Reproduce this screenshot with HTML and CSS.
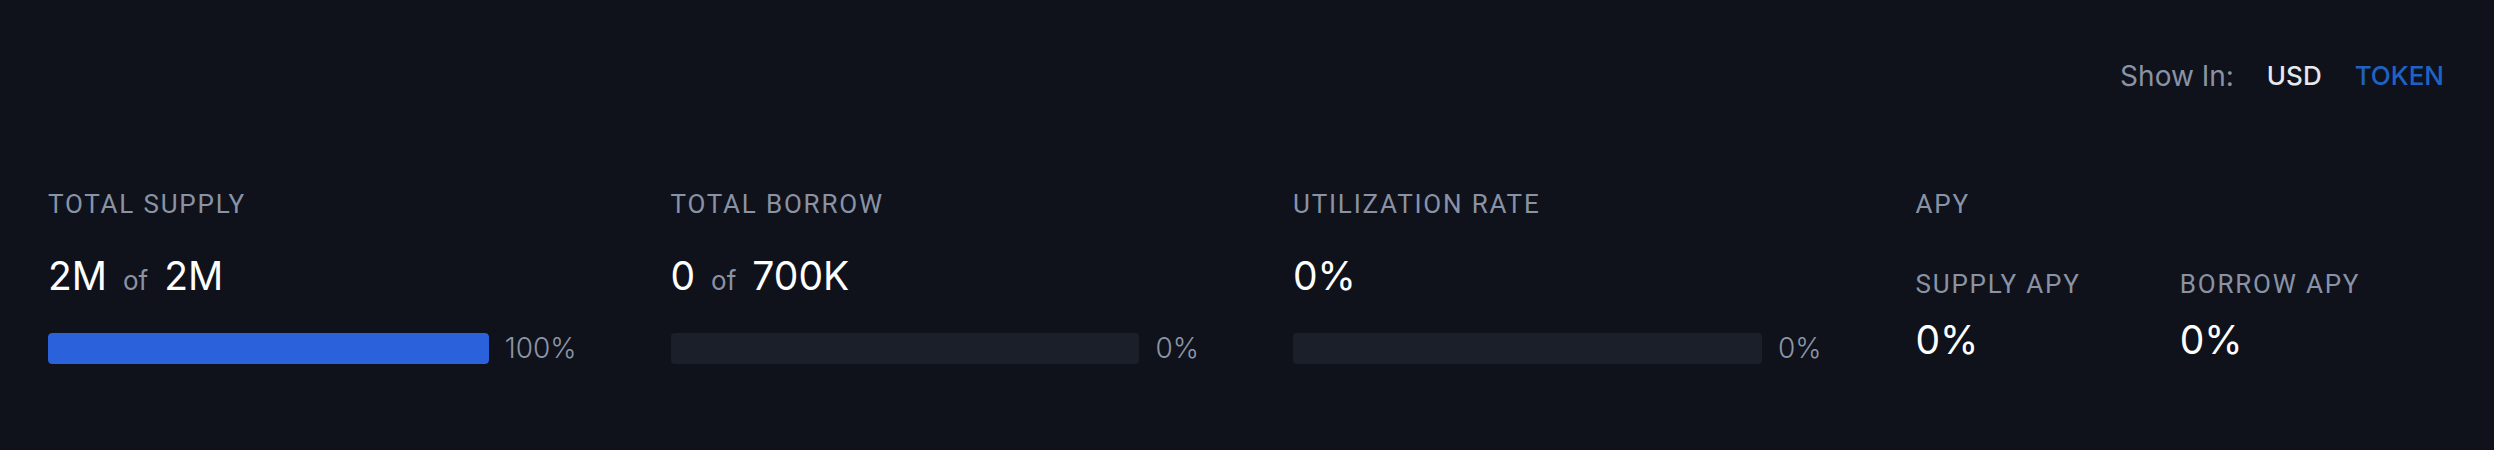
FILE: index.html
```html
<!DOCTYPE html>
<html lang="en">
<head>
<meta charset="utf-8">
<title>Market Stats</title>
<link rel="stylesheet" href="styles.css">
</head>
<body>
<div class="panel">
  <div class="toolbar">
    <span class="show-in">Show In:</span>
    <button class="opt opt-usd" type="button">USD</button>
    <button class="opt opt-token" type="button">TOKEN</button>
  </div>
  <div class="stats">
    <div class="stat">
      <div class="label">TOTAL SUPPLY</div>
      <div class="value">2M <span class="of">of</span> 2M</div>
      <div class="bar-row">
        <div class="track"><div class="fill" style="width:100%"></div></div>
        <span class="pct">100%</span>
      </div>
    </div>
    <div class="stat">
      <div class="label">TOTAL BORROW</div>
      <div class="value">0 <span class="of">of</span> 700K</div>
      <div class="bar-row">
        <div class="track"><div class="fill" style="width:0%"></div></div>
        <span class="pct">0%</span>
      </div>
    </div>
    <div class="stat">
      <div class="label">UTILIZATION RATE</div>
      <div class="value">0%</div>
      <div class="bar-row">
        <div class="track"><div class="fill" style="width:0%"></div></div>
        <span class="pct">0%</span>
      </div>
    </div>
    <div class="stat">
      <div class="label">APY</div>
      <div class="apy-grid">
        <div class="apy">
          <div class="label">SUPPLY APY</div>
          <div class="value apy-value">0%</div>
        </div>
        <div class="apy">
          <div class="label">BORROW APY</div>
          <div class="value apy-value">0%</div>
        </div>
      </div>
    </div>
  </div>
</div>
</body>
</html>
```
FILE: styles.css
```css
* { box-sizing: border-box; }
html, body {
  margin: 0;
  padding: 0;
  background: #0f121b;
  height: 100%;
}
body {
  font-family: Inter, "Noto Sans", sans-serif;
  color: #ffffff;
}
.panel {
  padding: 59px 50px 0 48px;
  min-height: 450px;
  background: #0f121b;
}
.toolbar {
  display: flex;
  justify-content: flex-end;
  align-items: center;
  gap: 33px;
  height: 34px;
  margin-bottom: 95px;
}
.show-in {
  font-size: 28px;
  line-height: 34px;
  color: #8a93a5;
}
.opt {
  font-family: inherit;
  font-size: 26px;
  line-height: 34px;
  font-weight: 500;
  background: none;
  border: 0;
  padding: 0;
  cursor: pointer;
}
.opt-usd { color: #e6e8ed; }
.opt-token { color: #1e63c4; }
.stats {
  display: grid;
  grid-template-columns: repeat(4, 1fr);
  column-gap: 94px;
}
.label {
  font-family: Roboto, Inter, sans-serif;
  font-size: 26px;
  line-height: 32px;
  color: #8a93a5;
  letter-spacing: 1.8px;
}
.value {
  font-size: 39px;
  line-height: 46px;
  height: 46px;
  font-weight: 400;
  color: #ffffff;
  margin-top: 33px;
  display: flex;
  align-items: baseline;
  gap: 16px;
}
.of {
  font-size: 26px;
  line-height: 1;
  font-weight: 400;
  color: #8a93a5;
}
.bar-row {
  display: flex;
  align-items: center;
  gap: 16px;
  margin-top: 34px;
}
.track {
  flex: 1;
  height: 31px;
  border-radius: 4px;
  background: #1a1f2a;
  overflow: hidden;
}
.fill {
  height: 100%;
  background: #2b62db;
  border-radius: 4px;
}
.pct {
  font-size: 28px;
  line-height: 31px;
  font-weight: 300;
  color: #8c95a6;
}
.apy-grid {
  display: grid;
  grid-template-columns: 1fr 1fr;
  margin-top: 48px;
}
.apy-value {
  margin-top: 17px;
}
```
